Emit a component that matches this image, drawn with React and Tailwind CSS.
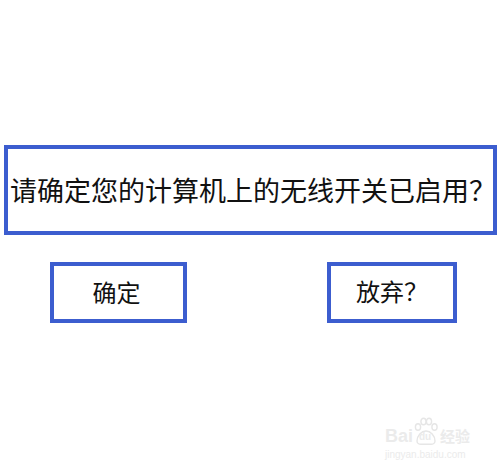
const cjk = { fontFamily: '"Liberation Serif", "Noto Sans CJK SC", serif' };
const latin = { fontFamily: '"Liberation Sans", sans-serif' };

// faint site watermark in the bottom corner
const Watermark = () => (
  <div className="absolute right-[30px] bottom-[13px] flex flex-col items-start text-[#ebebeb] select-none">
    <div className="flex items-end">
      <span className="text-[18px] font-bold leading-none ml-[2px]" style={latin}>
        Bai
      </span>
      <div className="relative w-[26px] h-[28px]">
        <svg viewBox="0 0 26 28" className="absolute inset-0" fill="none" stroke="#e6e6e6" strokeWidth="1.4">
          <ellipse cx="5" cy="10" rx="2.6" ry="3.2" />
          <ellipse cx="10.5" cy="4.5" rx="2.6" ry="3.2" />
          <ellipse cx="16" cy="4.5" rx="2.6" ry="3.2" />
          <ellipse cx="21.5" cy="10" rx="2.6" ry="3.2" />
          <path d="M4 24c0-5.5 4.5-10 9-10s9 4.5 9 10c0 2-2 3.3-4 3.3H8c-2 0-4-1.3-4-3.3z" />
        </svg>
        <span className="absolute left-[6px] bottom-[3px] text-[10px] font-bold leading-none" style={latin}>
          du
        </span>
      </div>
      <span className="text-[15px] font-bold leading-none ml-[1px]" style={cjk}>
        经验
      </span>
    </div>
    <span className="text-[10px] leading-none mt-[5px] ml-[2px]" style={latin}>
      jingyan.baidu.com
    </span>
  </div>
);

export default function App() {
  return (
    <div className="relative w-[500px] h-[473px] bg-white overflow-hidden">
      <div className="flex flex-col pt-[145px]">
        <div className="ml-[4px] w-[493px] h-[90px] border-[4px] border-[#3c5dcf] flex items-center pl-[2px] overflow-hidden">
          <span className="text-[27px] leading-none whitespace-nowrap text-[#111] mt-[4px]" style={cjk}>
            请确定您的计算机上的无线开关已启用？
          </span>
        </div>

        <div className="flex mt-[27px]">
          <div className="ml-[50px] w-[137px] h-[61px] border-[4px] border-[#3c5dcf] flex items-center justify-center">
            <span className="text-[24px] leading-none text-[#111] mr-[4px] mt-[2px]" style={cjk}>
              确定
            </span>
          </div>
          <div className="ml-[140px] w-[130px] h-[61px] border-[4px] border-[#3c5dcf] flex items-center justify-center">
            <span className="text-[24px] leading-none text-[#111]" style={cjk}>
              放弃？
            </span>
          </div>
        </div>
      </div>

      <Watermark />
    </div>
  );
}
